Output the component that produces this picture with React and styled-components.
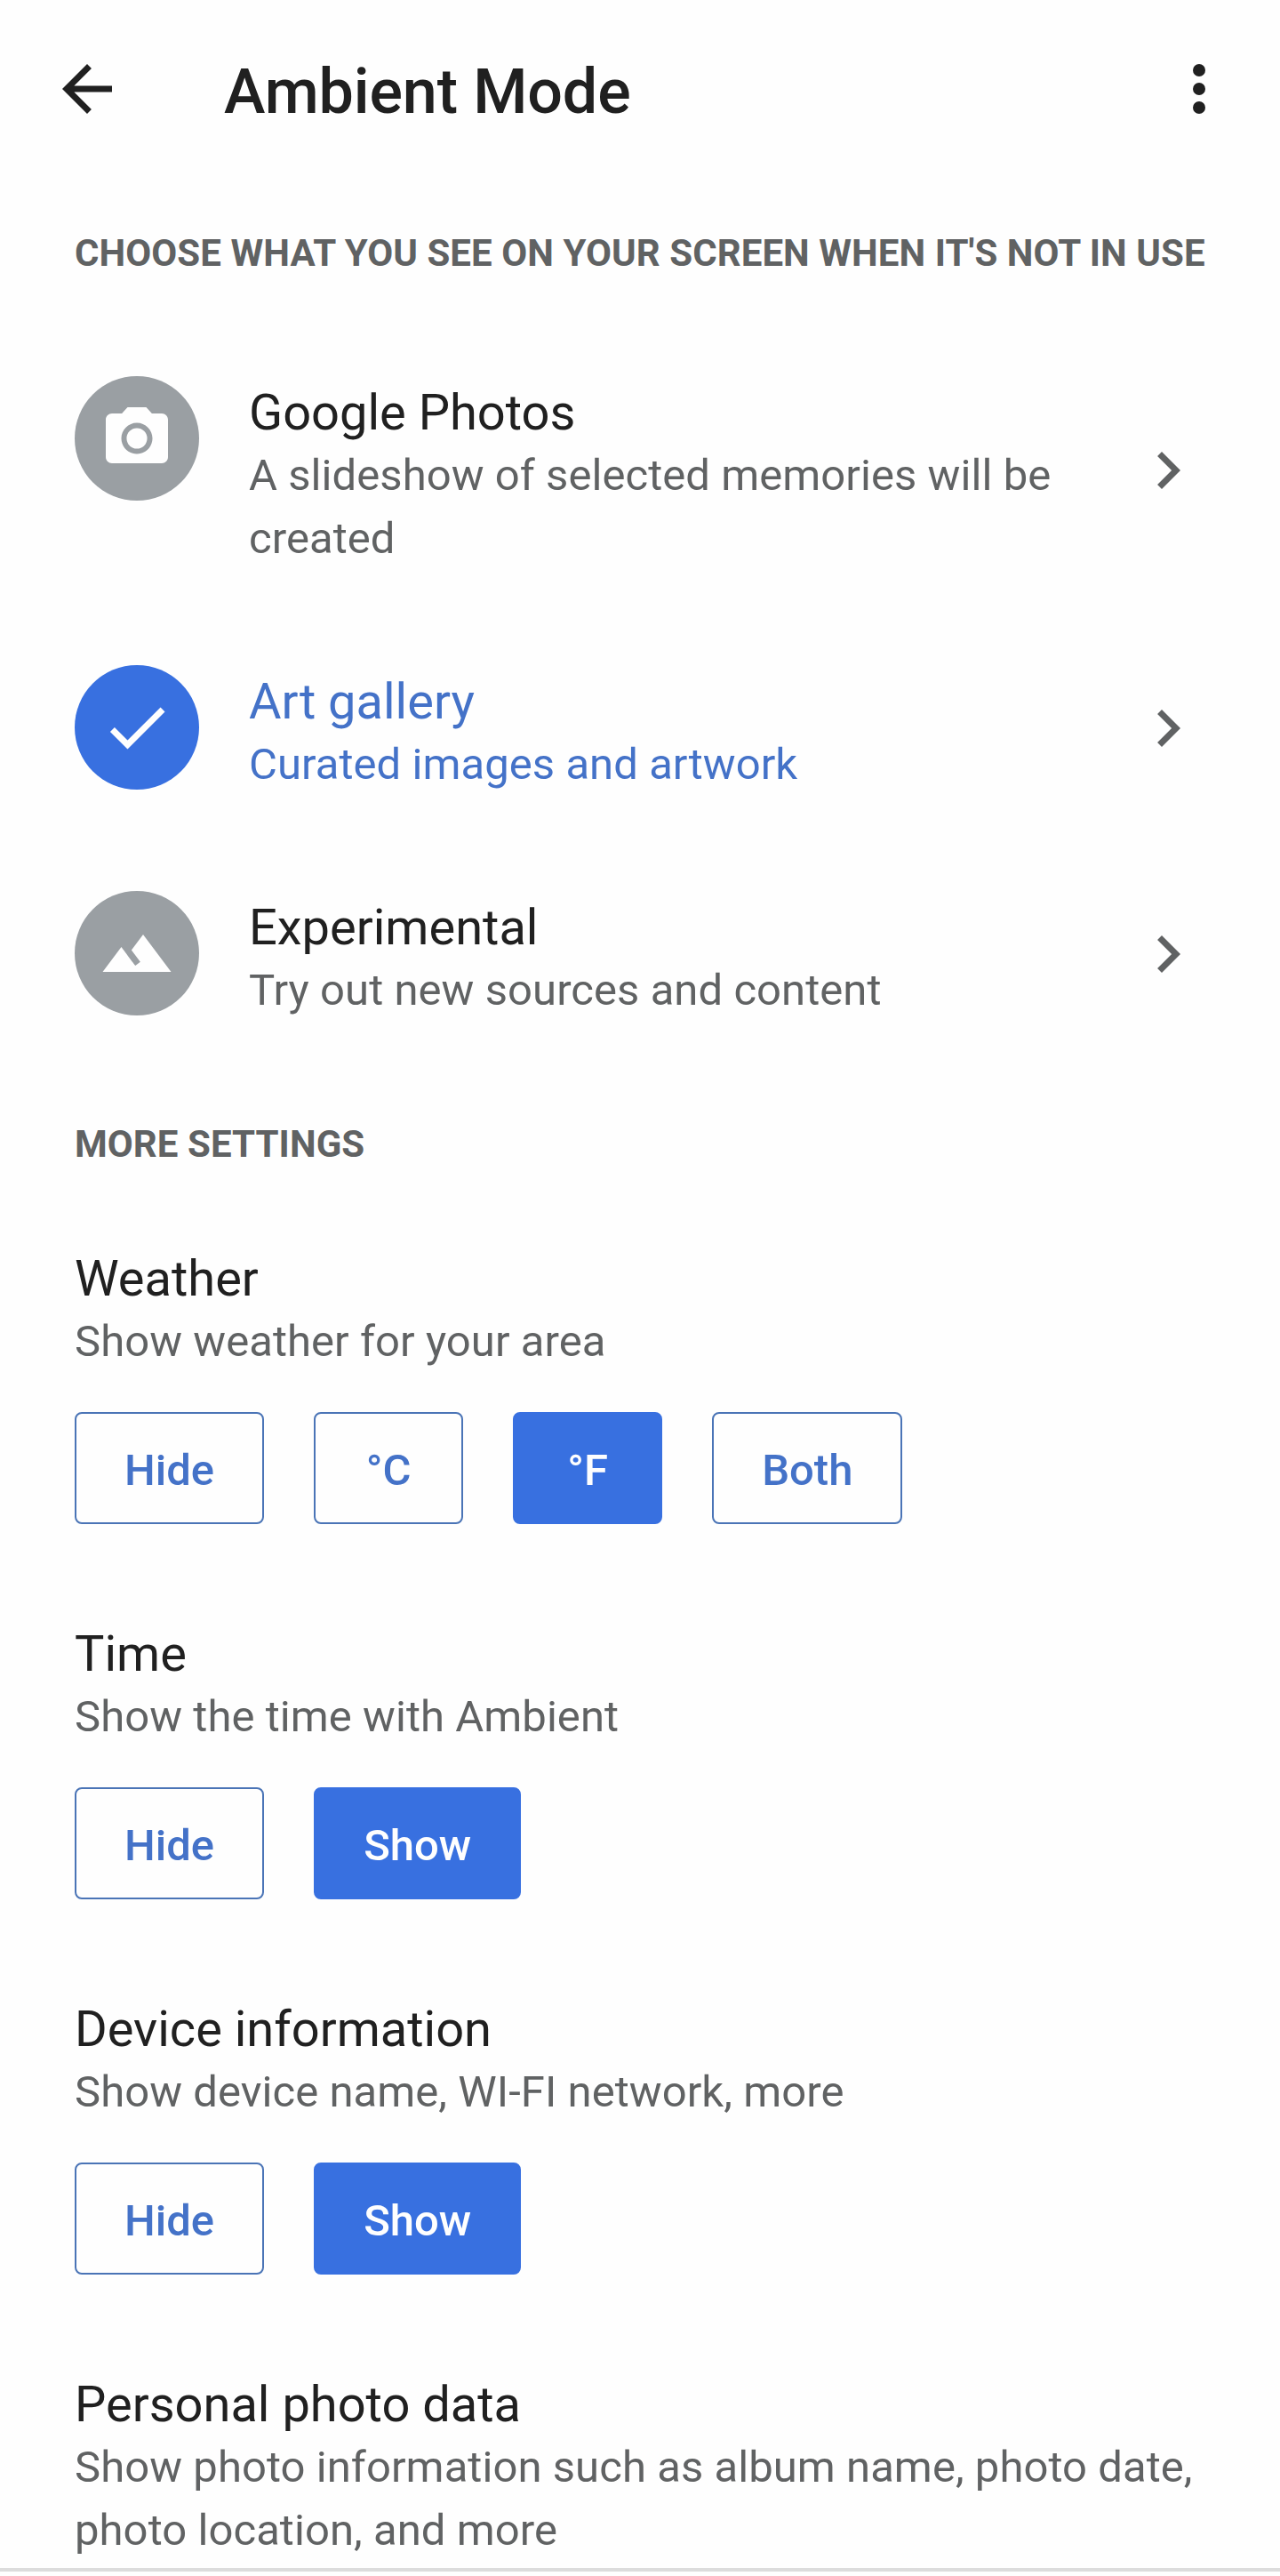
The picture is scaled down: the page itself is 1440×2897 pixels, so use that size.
import React, { useState } from "react";
import styled, { createGlobalStyle } from "styled-components";

const SOURCES = [
  {
    id: "photos",
    title: "Google Photos",
    text: "A slideshow of selected memories will be created",
    icon: (
      <>
        <circle cx="12" cy="12" r="3.3" />
        <path d="M9 2L7.17 4H4c-1.1 0-2 .9-2 2v12c0 1.1.9 2 2 2h16c1.1 0 2-.9 2-2V6c0-1.1-.9-2-2-2h-3.17L15 2H9zm3 15c-2.76 0-5-2.24-5-5s2.24-5 5-5 5 2.24 5 5-2.24 5-5 5z" />
      </>
    ),
  },
  {
    id: "art",
    title: "Art gallery",
    text: "Curated images and artwork",
    selected: true,
    icon: <path d="M9 16.17L4.83 12l-1.42 1.41L9 19 21 7l-1.41-1.41z" />,
  },
  {
    id: "experimental",
    title: "Experimental",
    text: "Try out new sources and content",
    icon: (
      <path d="M14 6l-3.75 5 2.85 3.8-1.6 1.2C9.81 13.75 7 10 7 10l-6 8h22L14 6z" />
    ),
  },
];

const SETTINGS = [
  {
    title: "Weather",
    text: "Show weather for your area",
    options: ["Hide", "°C", "°F", "Both"],
    value: "°F",
  },
  {
    title: "Time",
    text: "Show the time with Ambient",
    options: ["Hide", "Show"],
    value: "Show",
  },
  {
    title: "Device information",
    text: "Show device name, WI-FI network, more",
    options: ["Hide", "Show"],
    value: "Show",
  },
  {
    title: "Personal photo data",
    text: "Show photo information such as album name, photo date, photo location, and more",
    options: [],
  },
];

const SourceRow = ({ source }) => (
  <Row>
    <Circle $selected={source.selected}>
      <Icon viewBox="0 0 24 24">{source.icon}</Icon>
    </Circle>
    <RowText>
      <Title $selected={source.selected}>{source.title}</Title>
      <Desc $selected={source.selected}>{source.text}</Desc>
    </RowText>
    <Chevron viewBox="0 0 24 24">
      <path d="M10 6L8.59 7.41 13.17 12l-4.58 4.59L10 18l6-6z" />
    </Chevron>
  </Row>
);

const Setting = ({ setting }) => {
  const [value, setValue] = useState(setting.value);

  return (
    <div>
      <Title>{setting.title}</Title>
      <Desc>{setting.text}</Desc>
      {setting.options.length > 0 && (
        <Options>
          {setting.options.map((option) => (
            <Option
              key={option}
              $active={option === value}
              onClick={() => setValue(option)}
            >
              {option}
            </Option>
          ))}
        </Options>
      )}
    </div>
  );
};

const App = () => {
  return (
    <Page>
      <GlobalStyle />
      <Header>
        <Icon viewBox="0 0 24 24">
          <path d="M20 11H7.83l5.59-5.59L12 4l-8 8 8 8 1.41-1.41L7.83 13H20v-2z" />
        </Icon>
        <PageTitle>Ambient Mode</PageTitle>
        <Icon viewBox="0 0 24 24">
          <circle cx="12" cy="6" r="2" />
          <circle cx="12" cy="12" r="2" />
          <circle cx="12" cy="18" r="2" />
        </Icon>
      </Header>
      <Heading>Choose what you see on your screen when it's not in use</Heading>
      <Sources>
        {SOURCES.map((source) => (
          <SourceRow key={source.id} source={source} />
        ))}
      </Sources>
      <Heading>More settings</Heading>
      <Settings>
        {SETTINGS.map((setting) => (
          <Setting key={setting.title} setting={setting} />
        ))}
      </Settings>
      <Divider />
    </Page>
  );
};

export default App;

const GlobalStyle = createGlobalStyle`
  * {
    box-sizing: border-box;
  }
  body {
    margin: 0;
    background-color: #fefefe;
    font-family: Roboto, sans-serif;
  }
`;

const Page = styled.div`
  width: 1440px;
  height: 2897px;
  overflow: hidden;
`;

const Header = styled.header`
  display: flex;
  align-items: center;
  height: 200px;
  margin-bottom: 60px;
  padding: 0 49px 0 56px;
  color: #202020;
`;

const PageTitle = styled.h1`
  flex: 1;
  margin: 0;
  padding: 6px 0 0 112px;
  font-size: 70px;
  font-weight: 500;
  line-height: 82px;
  letter-spacing: -0.12px;
`;

const Icon = styled.svg`
  flex: none;
  width: 84px;
  height: 84px;
  fill: currentColor;
`;

const Heading = styled.h2`
  margin: 0;
  padding: 0 84px;
  color: #606263;
  font-size: 42px;
  font-weight: 700;
  line-height: 50px;
  letter-spacing: 0.07px;
  text-transform: uppercase;
  white-space: nowrap;
`;

const Sources = styled.div`
  display: flex;
  flex-direction: column;
  gap: 101px;
  padding: 107px 84px 113px;
`;

const Row = styled.div`
  display: flex;
  align-items: flex-start;
  cursor: pointer;
`;

const Circle = styled.div`
  display: flex;
  flex: none;
  align-items: center;
  justify-content: center;
  width: 140px;
  height: 140px;
  margin-top: 6px;
  border-radius: 50%;
  background-color: ${({ $selected }) => ($selected ? "#3870e0" : "#9a9fa3")};
  color: #fefefe;
`;

const RowText = styled.div`
  flex: 1;
  padding: 12px 56px 0;
`;

const Title = styled.div`
  color: ${({ $selected }) => ($selected ? "#4472c8" : "#202020")};
  font-size: 56px;
  line-height: 70px;
`;

const Desc = styled.div`
  color: ${({ $selected }) => ($selected ? "#4472c8" : "#606263")};
  font-size: 49px;
  line-height: 71px;
  letter-spacing: 0.06px;
`;

const Chevron = styled(Icon)`
  align-self: center;
  color: #606263;
`;

const Settings = styled.div`
  display: flex;
  flex-direction: column;
  gap: 111px;
  padding: 91px 84px 7px;
`;

const Options = styled.div`
  display: flex;
  gap: 56px;
  margin-top: 44px;
`;

const Option = styled.button`
  min-width: 168px;
  height: 126px;
  padding: 4px 54px 0;
  border: 2px solid ${({ $active }) => ($active ? "#3870e0" : "#4a74b6")};
  border-radius: 8px;
  background-color: ${({ $active }) => ($active ? "#3870e0" : "transparent")};
  color: ${({ $active }) => ($active ? "#fefefe" : "#4472c8")};
  font-family: inherit;
  font-size: 49px;
  font-weight: 500;
  cursor: pointer;
`;

const Divider = styled.div`
  height: 4px;
  background-color: #dcdcdc;
`;
